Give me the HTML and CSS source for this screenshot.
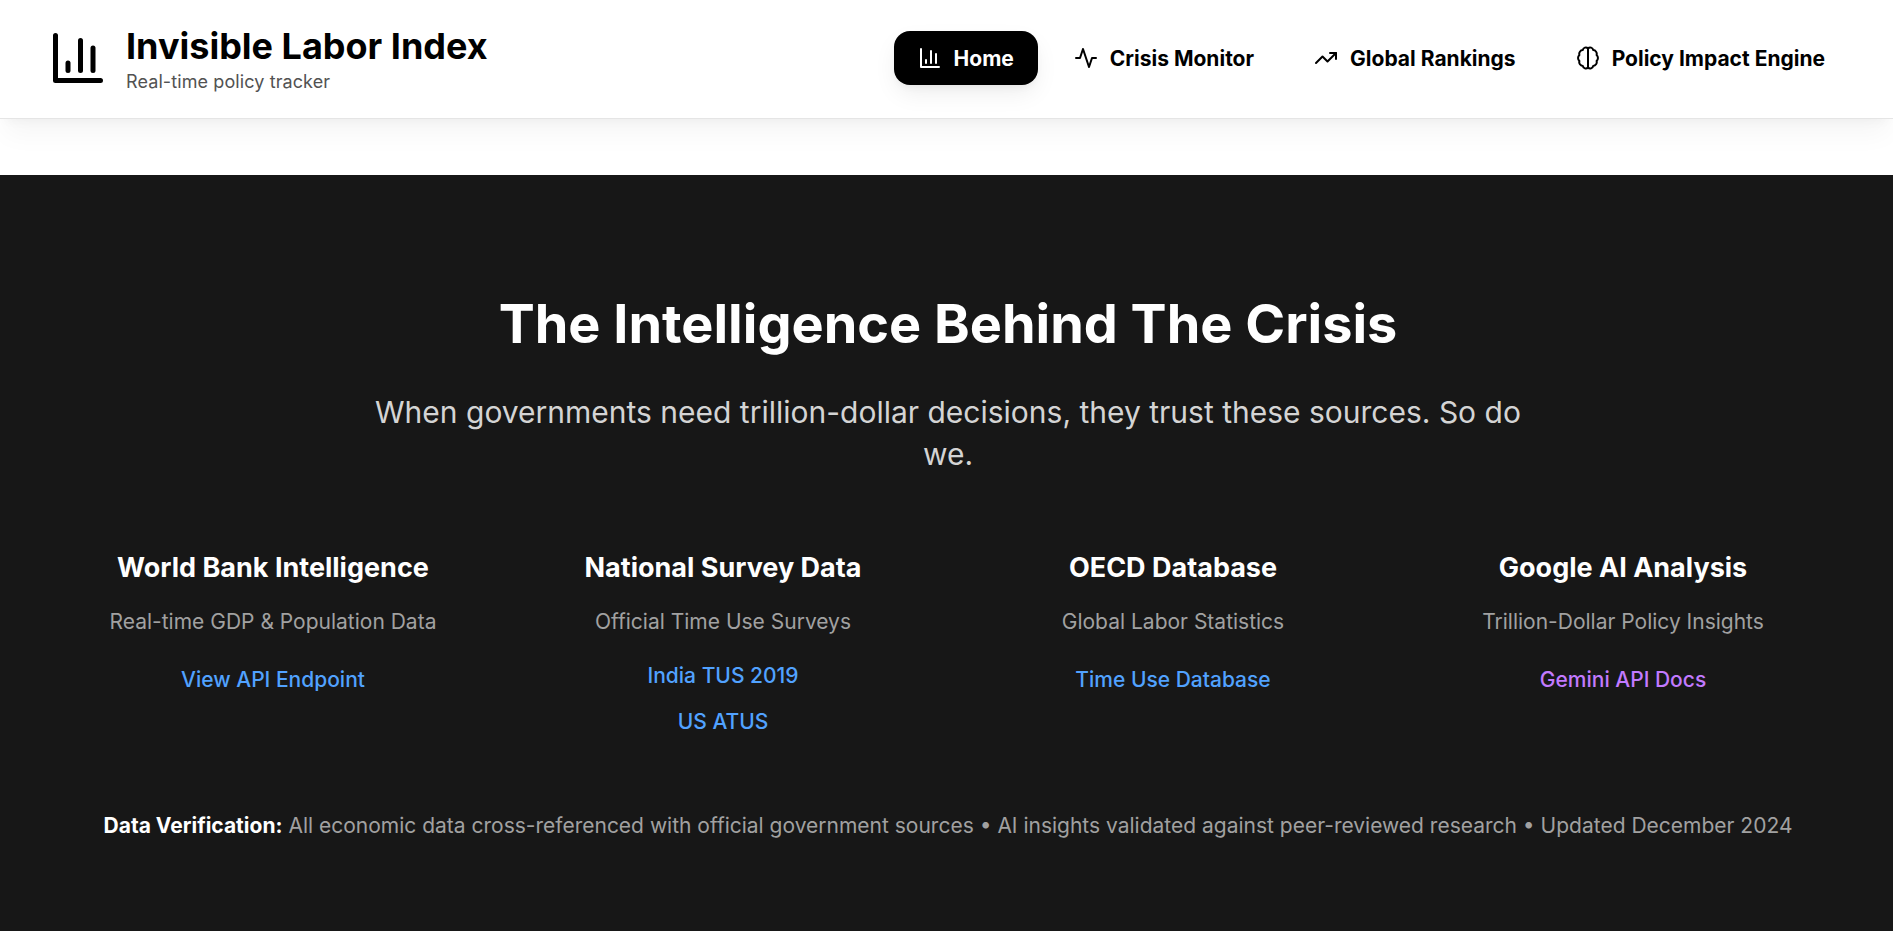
FILE: index.html
```html
<!DOCTYPE html>
<html lang="en">
<head>
<meta charset="utf-8">
<title>Invisible Labor Index</title>
<link rel="stylesheet" href="styles.css">
</head>
<body>
<header class="topbar">
  <div class="brand">
    <svg class="brand-icon" viewBox="0 0 24 24" fill="none" stroke="currentColor" stroke-width="2" stroke-linecap="round" stroke-linejoin="round"><path d="M3 3v18h18"/><path d="M8 17v-3"/><path d="M13 17V5"/><path d="M18 17V8"/></svg>
    <div class="brand-text">
      <h1 class="brand-title">Invisible Labor Index</h1>
      <p class="brand-sub">Real-time policy tracker</p>
    </div>
  </div>
  <nav class="nav">
    <a class="nav-item active"><svg class="nav-icon" viewBox="0 0 24 24" fill="none" stroke="currentColor" stroke-width="2" stroke-linecap="round" stroke-linejoin="round"><path d="M3 3v18h18"/><path d="M8 17v-3"/><path d="M13 17V5"/><path d="M18 17V8"/></svg>Home</a>
    <a class="nav-item"><svg class="nav-icon" viewBox="0 0 24 24" fill="none" stroke="currentColor" stroke-width="2" stroke-linecap="round" stroke-linejoin="round"><path d="M22 12h-4l-3 9L9 3l-3 9H2"/></svg>Crisis Monitor</a>
    <a class="nav-item"><svg class="nav-icon" viewBox="0 0 24 24" fill="none" stroke="currentColor" stroke-width="2" stroke-linecap="round" stroke-linejoin="round"><path d="M22 7l-8.5 8.5-5-5L2 17"/><path d="M16 7h6v6"/></svg>Global Rankings</a>
    <a class="nav-item"><svg class="nav-icon" viewBox="0 0 24 24" fill="none" stroke="currentColor" stroke-width="2" stroke-linecap="round" stroke-linejoin="round"><path d="M12 2.5a3 3 0 0 0-5.2 1.6A3.8 3.8 0 0 0 3.4 9a4 4 0 0 0 0 6a3.8 3.8 0 0 0 3.4 4.9A3 3 0 0 0 12 21.5Z"/><path d="M12 2.5a3 3 0 0 1 5.2 1.6A3.8 3.8 0 0 1 20.6 9a4 4 0 0 1 0 6a3.8 3.8 0 0 1-3.4 4.9A3 3 0 0 1 12 21.5Z"/></svg>Policy Impact Engine</a>
  </nav>
</header>
<div class="spacer"></div>
<section class="sources">
  <h2 class="sources-title">The Intelligence Behind The Crisis</h2>
  <p class="sources-lead">When governments need trillion-dollar decisions, they trust these sources. So do we.</p>
  <div class="source-grid">
    <div class="source">
      <h3 class="source-name">World Bank Intelligence</h3>
      <p class="source-desc">Real-time GDP &amp; Population Data</p>
      <a class="source-link">View API Endpoint</a>
    </div>
    <div class="source">
      <h3 class="source-name">National Survey Data</h3>
      <p class="source-desc">Official Time Use Surveys</p>
      <div class="link-stack">
        <a class="source-link">India TUS 2019</a>
        <a class="source-link">US ATUS</a>
      </div>
    </div>
    <div class="source">
      <h3 class="source-name">OECD Database</h3>
      <p class="source-desc">Global Labor Statistics</p>
      <a class="source-link">Time Use Database</a>
    </div>
    <div class="source">
      <h3 class="source-name">Google AI Analysis</h3>
      <p class="source-desc">Trillion-Dollar Policy Insights</p>
      <a class="source-link purple">Gemini API Docs</a>
    </div>
  </div>
  <p class="verify"><strong>Data Verification:</strong> All economic data cross-referenced with official government sources • AI insights validated against peer-reviewed research • Updated December 2024</p>
</section>
</body>
</html>
```
FILE: styles.css
```css
* { box-sizing: border-box; }
html, body { margin: 0; padding: 0; }
body {
  height: 931px;
  overflow: hidden;
  background: #fff;
  font-family: Inter, "Liberation Sans", sans-serif;
  color: #000;
}
h1, h2, h3, p { margin: 0; }
.topbar {
  position: relative;
  height: 119px;
  padding: 0 44px 2px 48px;
  display: flex;
  align-items: center;
  justify-content: space-between;
  background: #fff;
  border-bottom: 1px solid #e5e5e5;
  box-shadow: 0 20px 25px -5px rgba(0,0,0,.04), 0 8px 10px -6px rgba(0,0,0,.04);
}
.brand { display: flex; align-items: center; gap: 18px; }
.brand-icon { width: 60px; height: 60px; display: block; }
.brand-text { padding-top: 5px; }
.brand-title { font-size: 36px; line-height: 40px; font-weight: 700; }
.brand-sub { margin-top: 2px; font-size: 18px; line-height: 28px; letter-spacing: .1px; color: #525252; }
.nav { display: flex; align-items: center; gap: 12px; }
.nav-item {
  display: flex;
  align-items: center;
  gap: 12px;
  height: 54px;
  padding: 0 24px;
  border-radius: 16px;
  font-size: 21px;
  font-weight: 700;
}
.nav-item.active {
  background: #000;
  color: #fff;
  box-shadow: 0 10px 25px -3px rgba(0,0,0,.08), 0 4px 10px -4px rgba(0,0,0,.08);
}
.nav-icon { width: 24px; height: 24px; display: block; }
.spacer { height: 56px; }
.sources {
  height: 756px;
  background: #171717;
  color: #fff;
  padding: 119px 61px 0 64px;
  text-align: center;
}
.sources-title { font-size: 54px; line-height: 60px; font-weight: 700; }
.sources-lead {
  width: 1152px;
  margin: 37px auto 0;
  font-size: 30px;
  line-height: 42px;
  color: #d4d4d4;
}
.source-grid {
  margin-top: 77px;
  display: grid;
  grid-template-columns: repeat(4, 1fr);
  gap: 32px;
}
.source-name { font-size: 27px; line-height: 32px; font-weight: 700; }
.source-desc { margin-top: 24px; font-size: 21px; line-height: 28px; color: #a1a1a1; }
.link-stack { display: flex; flex-direction: column; gap: 14px; margin-top: 24px; }
.source-link { display: block; margin-top: 28px; font-size: 21px; line-height: 32px; font-weight: 500; color: #51a2ff; }
.link-stack .source-link { margin-top: 0; }
.source-link.purple { color: #c27aff; }
.verify { margin-top: 74px; font-size: 21px; line-height: 28px; color: #a1a1a1; }
.verify strong { color: #fff; font-weight: 700; }
```
